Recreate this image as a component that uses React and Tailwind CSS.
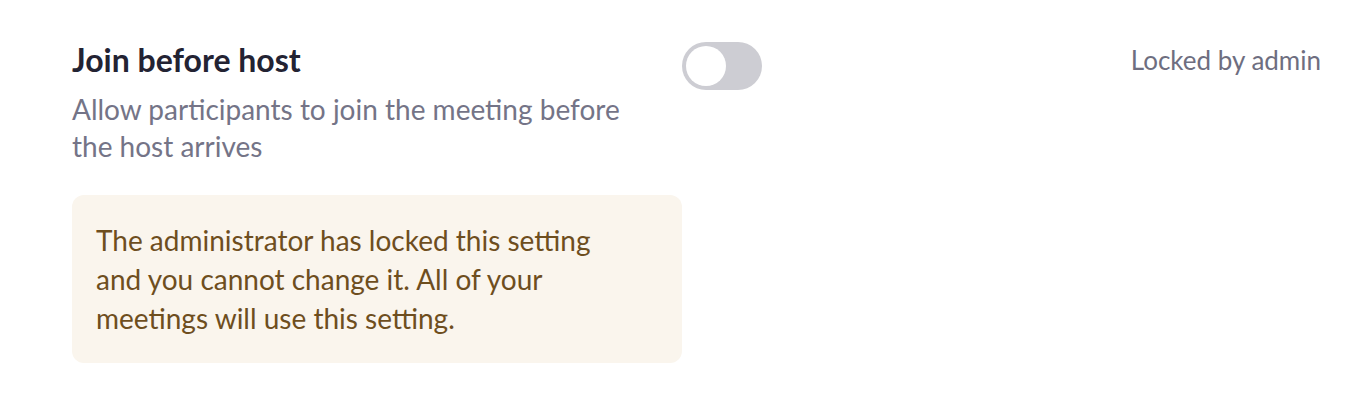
import React from 'react';

const App = () => {
    return (
    <div className="w-[1362px] h-[402px] bg-white" style={{ fontFamily: 'Lato, "Noto Sans", sans-serif' }}>
        <div className="flex items-start justify-between pl-[72px] pr-[41px] pt-[42px]">
            <div className="flex items-start">
                <div className="w-[610px]">
                    <h2 className="text-[32px] leading-[36px] font-bold text-[#232333]">Join before host</h2>
                    <p className="mt-[13px] w-[580px] text-[28px] leading-[37px] text-[#747487]">
                        Allow participants to join the meeting before the host arrives
                    </p>
                    <div className="mt-[30px] rounded-[12px] bg-[#faf5ed] px-[24px] pt-[26px] pb-[25px]">
                        <p className="w-[510px] text-[28px] leading-[39px] text-[#6e4e1e]">
                            The administrator has locked this setting and you cannot change it. All of your meetings will use this setting.
                        </p>
                    </div>
                </div>
                <button
                    disabled
                    className="relative w-[80px] h-[48px] rounded-full bg-[#cdcdd3] cursor-not-allowed"
                >
                    <span className="absolute left-[4px] top-[4px] w-[40px] h-[40px] rounded-full bg-white" />
                </button>
            </div>
            <span className="text-[26px] leading-[36px] text-[#6e6e80]">Locked by admin</span>
        </div>
    </div>
    );
}

export default App;
